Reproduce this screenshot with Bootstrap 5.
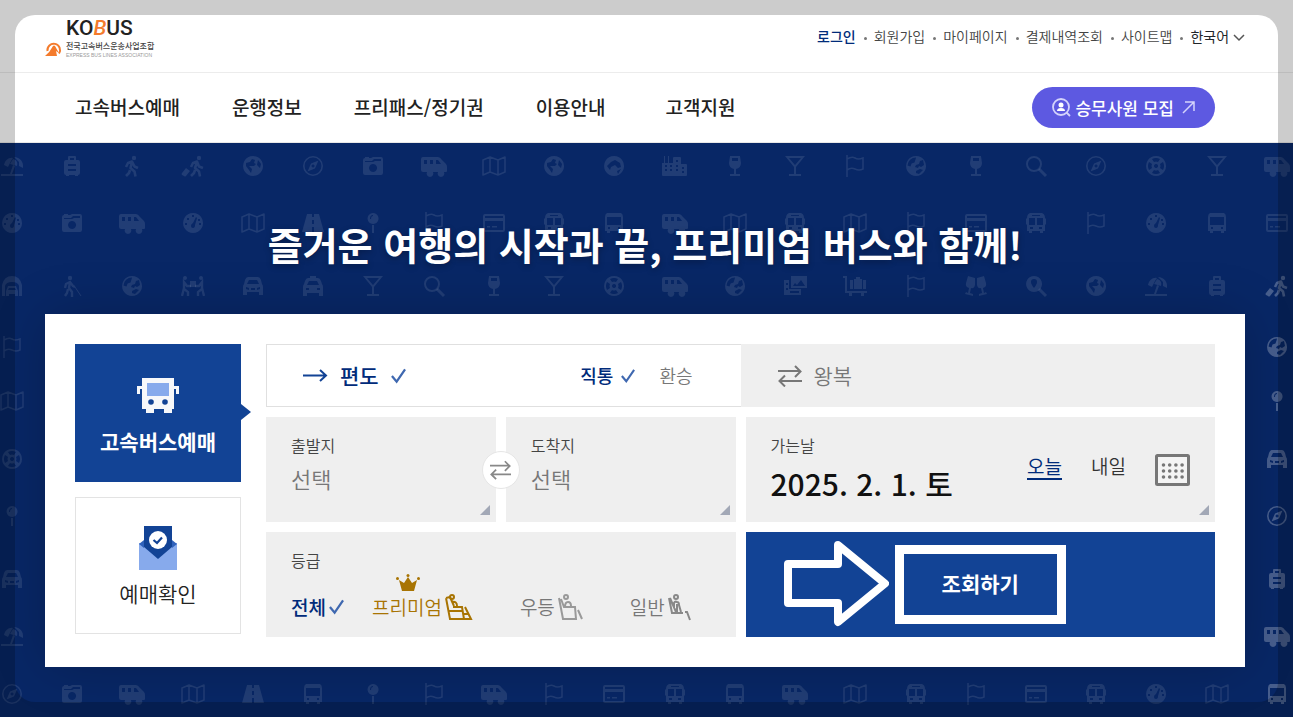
<!DOCTYPE html>
<html lang="ko">
<head>
<meta charset="utf-8">
<meta name="viewport" content="width=device-width, initial-scale=1">
<title>KOBUS 전국고속버스운송사업조합</title>
<link href="https://cdn.jsdelivr.net/npm/bootstrap@5.3.0/dist/css/bootstrap.min.css" rel="stylesheet">
<style>
  :root { --navy: #002b7a; --blue: #124395; --deep: #082766; --pane: #efefef; --gold: #a87403; }
  body { font-family: "Noto Sans CJK KR", "Noto Sans", sans-serif; font-size: 16px; color: #222; background: var(--deep); }
  a { color: inherit; text-decoration: none; }
  button { border: 0; padding: 0; background: none; color: inherit; text-align: left; }
  .shell { margin-left: 45px; margin-right: 48px; }

  /* rounded window frame that dims the edge of the page */
  .window-frame { position: fixed; inset: 15px; border-radius: 20px; box-shadow: 0 0 0 60px rgba(0,0,0,.2); pointer-events: none; z-index: 1050; }

  .topbar { height: 73px; border-bottom: 1px solid #ececec; }
  .brand { display: grid; grid-template-columns: 17px auto; column-gap: 4px; padding-top: 16px; }
  .brand-word { grid-column: 2; font: 500 21px/24px Roboto, sans-serif; color: #222; }
  .brand-word i { color: #f47b2c; }
  .brand-mark { grid-column: 1; grid-row: 2; margin-top: 1px; }
  .brand-sub { font-size: 8px; line-height: 12px; font-weight: 500; color: #444; }
  .brand-en { display: block; font: 5px/6px "Liberation Sans", sans-serif; color: #999; }
  .util { font-size: 14px; line-height: 20px; font-weight: 350; color: #444; padding-top: 26px; }
  .util li + li::before { content: ""; display: inline-block; width: 3px; height: 3px; border-radius: 50%; background: #777; margin: 0 7px 0 8px; vertical-align: middle; }
  .util .login { color: var(--navy); font-weight: 500; }

  .mainbar { height: 70px; border-bottom: 1px solid #e8e8e8; }
  .mainbar .shell { padding: 0 30px; }
  .mainbar .menu { gap: 52px; font-size: 19px; font-weight: 500; }
  .recruit { height: 41px; padding: 0 20px; gap: 4px; border-radius: 21px; background: #5d59e1; color: #fff; font-size: 17px; font-weight: 500; }

  .hero { overflow: hidden; background: var(--deep); }
  .pattern { position: absolute; inset: 0; padding: 11px 4px 0 0; color: rgba(255,255,255,.1); display: grid; align-content: start; grid-template-rows: 57px 63px 61px 54px 58px 57px 63px 57px 58px 24px; }
  .pattern svg { width: 24px; height: 24px; display: block; overflow: visible; }
  .pattern .bright { color: rgba(255,255,255,.26); }
  .headline { padding-top: 72px; margin-bottom: 42px; font-size: 38px; line-height: 57px; font-weight: 700; color: #fff; text-shadow: 0 2px 6px rgba(0,0,0,.3); }

  .booking { background: #fff; padding: 30px; gap: 25px; box-shadow: 0 0 50px rgba(0,0,0,.2); margin-bottom: 50px; }
  .side { width: 166px; flex: none; gap: 15px; }
  .side-tab { height: 137px; border: 1px solid #e3e3e3; font-size: 21px; line-height: 31px; gap: 8px; font-weight: 350; color: #222; padding-top: 2px; }
  .side-tab.current { height: 138px; border: 0; background: var(--blue); color: #fff; font-weight: 700; gap: 12px; padding-top: 8px; }
  .side-tab.current::after { content: ""; position: absolute; left: 100%; top: 60px; border: solid transparent; border-width: 8px 0 8px 10px; border-left-color: var(--blue); }

  .tight { --bs-gutter-x: 10px; --bs-gutter-y: 10px; }
  .pair { --bs-gutter-x: 10px; --bs-gutter-y: 0; }
  .trip { height: 63px; font-size: 21px; }
  .trip label { gap: 12px; }
  .trip-row { margin-bottom: 10px; }
  .trip-oneway { border: 1px solid #e0e0e0; border-right: 0; padding: 0 48px 0 36px; }
  .trip-round { background: var(--pane); padding: 0 37px; color: #777; font-weight: 350; }
  .on { color: var(--navy); font-weight: 500; }
  .off { color: #777; font-weight: 350; }
  .tick { height: 16px; color: #3f68b0; }
  .trip .opt { display: flex; align-items: center; font-size: 18px; gap: 8px; }
  .pane { height: 105px; background: var(--pane); padding: 16px 25px; position: relative; }
  .cap { display: block; font-size: 16px; line-height: 24px; font-weight: 350; color: #444; }
  .pick { display: block; font-size: 22px; line-height: 33px; margin-top: 5px; color: #777; font-weight: 350; }
  .corner::after { content: ""; position: absolute; right: 6px; bottom: 7px; border: 5px solid #a2a8b6; border-top-color: transparent; border-left-color: transparent; }
  .swap { position: absolute; left: 50%; top: 50%; transform: translate(-50%,-50%); width: 38px; height: 38px; border: 1px solid #e6e6e6; border-radius: 50%; background: #fff; color: #888; z-index: 2; }
  .date { display: block; font-size: 30px; line-height: 45px; font-weight: 500; color: #111; margin-top: 4px; }
  .days { gap: 29px; }
  .day { font-size: 19px; line-height: 24px; font-weight: 350; color: #333; border-bottom: 2px solid transparent; margin-bottom: 5px; }
  .day.on { color: var(--navy); font-weight: 400; border-bottom-color: var(--navy); }
  .grades { gap: 28px; margin-top: 21px; }
  .grade { font-size: 19px; line-height: 28px; gap: 3px; }
  .grade.off { margin-left: 19px; }
  .gold { color: var(--gold); font-weight: 350; }
  .crown { position: absolute; left: 24px; top: -19px; }
  .search { height: 105px; background: var(--blue); color: #fff; position: relative; }
  .search-mark { width: 171px; height: 79px; border: 9px solid #fff; font-size: 21px; font-weight: 700; padding-bottom: 2px; }
  .pointer { position: absolute; right: calc(50% + 91px); top: 8px; }
</style>
</head>
<body class="d-flex flex-column min-vh-100">

<svg width="0" height="0" class="position-absolute" aria-hidden="true">
  <defs>
    <symbol id="umbrella" viewBox="0 0 24 24"><path fill="currentColor" d="M4 11C5 6 9 3 13 4l-2 3-3 6zM14 3c6 0 10 5 9 11l-4-2 0-4zM13 5c4 1 5 4 4 7l-7-2zM13 11l2 1-3 8h11v2H1v-2h9z"/></symbol>
    <symbol id="case" viewBox="0 0 24 24"><path fill="currentColor" fill-rule="evenodd" d="M8 6V3q0-1 1-1h6q1 0 1 1v3h2q2 0 2 2v11q0 2-2 2v1h-3v-1H9v1H6v-1q-2 0-2-2V8q0-2 2-2zm2 0h4V4h-4zM8 10v2h8v-2zm0 5v2h8v-2z"/></symbol>
    <symbol id="walk" viewBox="0 0 24 24"><circle cx="14" cy="4" r="2.200" fill="currentColor"/><path fill="none" stroke="currentColor" stroke-width="2.600" stroke-linejoin="round" d="M6 13l2-4 4-1.500 2.500 5 3.500 1.500M12 8l-1.500 6 4 3.500 1 5M10 16l-1 3-3 3"/></symbol>
    <symbol id="hike" viewBox="0 0 24 24"><circle cx="18" cy="4" r="2.200" fill="currentColor"/><path fill="currentColor" d="M1 19l4-5 4 3-4 5q-1 1-2 0l-2-1q-1-1 0-2z"/><path fill="none" stroke="currentColor" stroke-width="2.600" stroke-linejoin="round" d="M10 13l2-4 4-1.500 2 5 4 1.500M16 8l-2 6 4 3.500 1 5M14 16l-1 3-3 3"/></symbol>
    <symbol id="africa" viewBox="0 0 24 24"><path fill="currentColor" fill-rule="evenodd" d="M12 2a10 10 0 1 0 .1 0zM5 9l4-1 2-3 3 1-1 3 2 1-2 2-5 0 3 3-1 4-2-3-3-4zM17 6l3 4-1 4-3-3z"/></symbol>
    <symbol id="globe" viewBox="0 0 24 24"><path fill="currentColor" fill-rule="evenodd" d="M12 2a10 10 0 1 0 .1 0zM12 3.500a8.500 8.500 0 0 0-8.500 8l3 1 1-3 3-1 1-3zM16 7l3-1 1 5-3 2-2-1-1 2-3-1 1-2 3-1zM12 17l4-2 3 1-4 4-3-1z"/></symbol>
    <symbol id="asia" viewBox="0 0 24 24"><path fill="currentColor" fill-rule="evenodd" d="M12 2a10 10 0 1 0 .1 0zM5 12l4-4 4-2 5 3 1 4-3 1-3-3-4 2-1 3zM15 17l4-2-3 5z"/></symbol>
    <symbol id="compass" viewBox="0 0 24 24"><circle cx="12" cy="12" r="9.200" fill="none" stroke="currentColor" stroke-width="1.600"/><path fill="currentColor" fill-rule="evenodd" d="M17.500 6.500l-3.500 8-7.500 3 3.500-8zM12 10.500a1.500 1.500 0 1 0 .1 0z"/></symbol>
    <symbol id="camera" viewBox="0 0 24 24"><path fill="currentColor" fill-rule="evenodd" d="M4 4V3h4v1h2l2-1h8q2 0 2 2v14q0 2-2 2H4q-2 0-2-2V6q0-2 2-2zm0 3v1h8l2-1h6V5h-7l-2 2zM12 10a4 4 0 1 0 .1 0z"/></symbol>
    <symbol id="van" viewBox="1 0 24 24" overflow="visible"><path fill="currentColor" fill-rule="evenodd" d="M2 3h15q2 0 4 3l4 4q1 1 1 3v4q0 1-1 1h-2a3.400 3.400 0 1 1-6 0h-5a3.400 3.400 0 1 1-6 0H2q-2 0-2-2V5q0-2 2-2zM3 6v4h3V6zm6 0v4h3V6zm6 0v4h5l-3-4z"/></symbol>
    <symbol id="map" viewBox="0 0 24 24"><path fill="none" stroke="currentColor" stroke-width="1.600" stroke-linejoin="round" d="M1 6l7-3v15l-7 3zM8 3l8 3v15l-8-3M16 6l7-3v15l-7 3"/></symbol>
    <symbol id="city" viewBox="1 0 24 24" overflow="visible"><path fill="currentColor" fill-rule="evenodd" d="M0 9h2V2h1v7h3V2h1v7h4V4q0-1 1-1h6q1 0 1 1v6h5q1 0 1 1v10q0 1-1 1H1q-1 0-1-1zm3 2v2h2v-2zm5 0v2h2v-2zm6-5v2h2V6zm0 5v2h2v-2zM3 15v2h2v-2zm5 0v2h2v-2zm6 0v2h2v-2zm6-2v2h2v-2zm0 4v2h2v-2z"/></symbol>
    <symbol id="wine" viewBox="0 0 24 24"><path fill="currentColor" fill-rule="evenodd" d="M7 2h10l1 7q0 5-5 6v5h4v2H7v-2h4v-5q-5-1-5-6zm2 2v3h6V4z"/></symbol>
    <symbol id="cocktail" viewBox="0 0 24 24"><path fill="currentColor" fill-rule="evenodd" d="M2 2h20l-9 11v7h5v2H6v-2h5v-7zm4 2l6 7 6-7z"/></symbol>
    <symbol id="flag" viewBox="0 0 24 24"><path fill="none" stroke="currentColor" stroke-width="1.600" d="M4 1v22M4 5q5-3 8-1t8 0v11q-4 2-8 0t-8 1"/></symbol>
    <symbol id="lens" viewBox="0 0 24 24"><g fill="none" stroke="currentColor"><circle cx="10" cy="10" r="7" stroke-width="2"/><path stroke-width="3" d="M15 15l7 7"/></g></symbol>
    <symbol id="lenspin" viewBox="0 0 24 24"><path fill="currentColor" fill-rule="evenodd" d="M10 2a8 8 0 1 0 .1 0zm0 3q3 0 3 3 0 2-3 6-3-4-3-6 0-3 3-3z"/><path stroke="currentColor" stroke-width="3" d="M15 15l7 7"/></symbol>
    <symbol id="ring" viewBox="0 0 24 24"><path fill="currentColor" fill-rule="evenodd" d="M12 2a10 10 0 1 0 .1 0zM8 5q4-2 8 0l-2 3q-2-1-4 0zM5 8q-2 4 0 8l3-2q-1-2 0-4zM19 8q2 4 0 8l-3-2q1-2 0-4zM8 19q4 2 8 0l-2-3q-2 1-4 0zM12 10a2 2 0 1 0 .1 0z"/></symbol>
    <symbol id="gauge" viewBox="0 0 24 24"><path fill="currentColor" fill-rule="evenodd" d="M12 2a10 10 0 1 0 .1 0zM15 6l1 1-2 7q0 3-2 3t-2-2 2-3zM11 4h2v2h-2zM6 7h2v2H6zM4 12h2v2H4zM18 12h2v2h-2zM17 8h2v2h-2z"/></symbol>
    <symbol id="card-pay" viewBox="0 0 24 24"><path fill="currentColor" fill-rule="evenodd" d="M3 3h18q2 0 2 2v14q0 2-2 2H3q-2 0-2-2V5q0-2 2-2zm0 2v2h18V5zm0 5v9h18v-9zm2 5h3v1.500H5zm5 0h5v1.500h-5z"/></symbol>
    <symbol id="bus" viewBox="0 0 24 24"><path fill="currentColor" fill-rule="evenodd" d="M5 2h14q2 1 2 4v14h-2v2h-3v-2H8v2H5v-2H3V6q0-3 2-4zm0 4v8h14V6zm1 10v2h2v-2zm10 0v2h2v-2z"/></symbol>
    <symbol id="coach" viewBox="0 0 24 24"><path fill="currentColor" fill-rule="evenodd" d="M6 2h12q3 1 3 5l1 1v5l-1 1v6h-2v2h-3v-2H8v2H5v-2H3v-6l-1-1V8l1-1q0-4 3-5zM8 4v1h8V4zM5 7v7h6V7zm8 0v7h6V7zM6 16v2h3v-2zm9 0v2h3v-2z"/></symbol>
    <symbol id="road" viewBox="0 0 24 24"><path fill="currentColor" fill-rule="evenodd" d="M6 3h5v3h2V3h5l5 18H13v-5h-2v5H1zm5 6v4h2V9z"/></symbol>
    <symbol id="pin" viewBox="0 0 24 24"><path fill="currentColor" fill-rule="evenodd" d="M12 2a5.500 5.500 0 1 0 .1 0zM9 8q0-4 3-4v1q-2 0-2 3zM11 14h2v8h-2z"/></symbol>
    <symbol id="garage" viewBox="0 0 24 24"><path fill="currentColor" fill-rule="evenodd" d="M2 22V11Q4 2 12 2t10 9v11h-3V12q-1-4-7-4t-7 4v10z"/><path fill="currentColor" fill-rule="evenodd" d="M8 12h8l2 5v5h-3v-2H9v2H6v-5zm1 2l-1 2h8l-1-2z"/></symbol>
    <symbol id="blind" viewBox="0 0 24 24"><circle cx="10" cy="4" r="2.200" fill="currentColor"/><path fill="none" stroke="currentColor" stroke-width="2.400" d="M5 14l1-4 4-2 3 4 2 1M10 8l-1 6 3 4v5M8 15l-1 4-2 3"/><path stroke="currentColor" d="M15 13l6 9"/></symbol>
    <symbol id="carry" viewBox="0 0 24 24"><circle cx="4" cy="4" r="2" fill="currentColor"/><circle cx="20" cy="4" r="2" fill="currentColor"/><path fill="currentColor" d="M9 7h6v6H9z"/><path fill="none" stroke="currentColor" stroke-width="2.400" d="M10 12H6L3 8v7l4 3v4M3 14l-2 8M14 12h4l3-4v7l-4 3v4M21 14l2 8"/></symbol>
    <symbol id="car" viewBox="0 0 24 24"><path fill="currentColor" fill-rule="evenodd" d="M7 3h10q2 0 3 3l1 4q1 1 1 3v8h-4v-3H6v3H2v-8q0-2 1-3l1-4q1-3 3-3zm1 3l-2 4h12l-2-4zM5 13v2l3 1v-2zm14 0l-3 1v2l3-1zM10 14v2h4v-2z"/></symbol>
    <symbol id="taxi" viewBox="0 0 24 24"><path fill="currentColor" fill-rule="evenodd" d="M9 2h6v2h2q2 0 3 3l1 3q1 1 1 3v9h-4v-3H6v3H2v-9q0-2 1-3l1-3q1-3 3-3h2zM8 7l-2 4h12l-2-4zM5 14v2h3v-2zm11 0v2h3v-2z"/></symbol>
    <symbol id="photos" viewBox="0 0 24 24"><path fill="currentColor" fill-rule="evenodd" d="M8 2h16v12H8zm2 10h12l-4-6-4 5-2-2zM1 6h5v9h12v6H1zm2 3v2h2V9zm0 5v2h2v-2zm4 3v2h9v-2z"/></symbol>
    <symbol id="cart" viewBox="0 0 24 24"><path fill="currentColor" d="M0 2h4v15h20v2h-3v3h-3v-3H9v3H6v-3H2V4H0zM7 6h3v9H7zM11 5h2V3h4v2h2v10h-8zM20 6h3v9h-3z"/></symbol>
    <symbol id="cheers" viewBox="0 0 24 24"><path fill="currentColor" d="M4 2l7 2v7q-1 4-4 3l-1 5 3 1v2l-8-2 1-2 2 1 1-5Q1 13 2 9zM20 2l-7 2v7q1 4 4 3l1 5-3 1v2l8-2-1-2-2 1-1-5q4-1 3-5z"/></symbol>

    <symbol id="check" viewBox="0 0 16 16"><path fill="none" stroke="currentColor" stroke-width="2.400" d="M1 8l5 6L15 1"/></symbol>
    <symbol id="arrows" viewBox="0 0 24 22"><path fill="none" stroke="currentColor" stroke-width="2" d="M0 6h22M17 1l5.500 5.500L17 12M24 16H2M7 10.500L1.500 16 7 21.500"/></symbol>
  </defs>
</svg>

<header class="bg-white">
  <div class="topbar">
    <div class="shell d-flex justify-content-between">
      <a href="#" class="brand" aria-label="KOBUS">
        <span class="brand-word">KO<i>B</i>US</span>
        <svg class="brand-mark" width="17" height="15" viewBox="0 0 17 15" aria-hidden="true"><path fill="none" stroke="#f47b2c" stroke-width="2" d="M2.500 10A6.300 6.300 0 1 1 14 12.500"/><path fill="#f47b2c" d="M0 15q5-4 8-10 1-1 2 0l4 7-3-2 1 5z"/></svg>
        <span class="brand-sub">전국고속버스운송사업조합<span class="brand-en">EXPRESS BUS LINES ASSOCIATION</span></span>
      </a>
      <ul class="util list-unstyled d-flex mb-0">
        <li><a href="#" class="login">로그인</a></li>
        <li><a href="#">회원가입</a></li>
        <li><a href="#">마이페이지</a></li>
        <li><a href="#">결제내역조회</a></li>
        <li><a href="#">사이트맵</a></li>
        <li><button type="button" class="text-dark">한국어 <svg width="12" height="8" viewBox="0 0 12 8" aria-hidden="true"><path fill="none" stroke="#555" stroke-width="1.500" d="M1 1l5 5 5-5"/></svg></button></li>
      </ul>
    </div>
  </div>
  <div class="mainbar">
    <div class="shell d-flex align-items-center justify-content-between h-100">
      <nav class="menu d-flex">
        <a href="#">고속버스예매</a><a href="#">운행정보</a><a href="#">프리패스/정기권</a><a href="#">이용안내</a><a href="#" class="ms-2">고객지원</a>
      </nav>
      <a href="#" class="recruit d-flex align-items-center">
        <svg width="19" height="19" viewBox="0 0 19 19" aria-hidden="true"><g fill="none" stroke="#d4d3fb" stroke-width="1.800"><circle cx="9" cy="9" r="8"/><path d="M14.500 14.500L18 18"/></g><circle cx="9" cy="7" r="2.500" fill="#fff"/><path fill="#fff" d="M5 13q0-3 4-3t4 3z"/></svg>
        승무사원 모집
        <svg class="ms-1" width="13" height="13" viewBox="0 0 13 13" aria-hidden="true"><path fill="none" stroke="#d4d3fb" stroke-width="1.500" d="M1 12L12 1M3 1h9v9"/></svg>
      </a>
    </div>
  </div>
</header>

<main class="hero position-relative flex-grow-1">
  <div class="pattern" id="pattern" aria-hidden="true"></div>

  <div class="shell position-relative">
    <h1 class="headline text-center">즐거운 여행의 시작과 끝, 프리미엄 버스와 함께!</h1>

    <section class="booking d-flex">
      <div class="side d-flex flex-column">
        <button type="button" class="side-tab current position-relative d-flex flex-column align-items-center justify-content-center">
          <svg width="42" height="36" viewBox="0 0 42 36" aria-hidden="true"><path fill="#f7f8fa" d="M5 0h32v8h5v8h-3v-5h-2v20h-2v4h-8v-4H17v4H9v-4H5V11H3v5H0V8h5z"/><path fill="#87aaec" d="M10 5h22v13H10z"/><circle cx="14" cy="24" r="2.800" fill="#124395"/><circle cx="28" cy="24" r="2.800" fill="#124395"/></svg>
          고속버스예매
        </button>
        <button type="button" class="side-tab d-flex flex-column align-items-center justify-content-center">
          <svg width="40" height="45" viewBox="0 0 40 45" aria-hidden="true"><path fill="#87aaec" d="M1 18h38v27H1z"/><path fill="#2f62bb" d="M1 19l5-4v8zM39 19l-5-4v8z"/><path fill="#124395" d="M6 1h28v21L20 34 6 22z"/><circle cx="20" cy="15" r="9" fill="#fff"/><path fill="none" stroke="#124395" stroke-width="2.200" d="M15.500 15l3.500 3 5-5.500"/></svg>
          예매확인
        </button>
      </div>

      <form class="flex-grow-1">
        <div class="row g-0 trip-row">
          <div class="col-6">
            <div class="trip trip-oneway d-flex align-items-center">
              <input type="radio" class="btn-check" name="trip" id="oneway" checked>
              <label for="oneway" class="on d-flex align-items-center">
                <svg width="25" height="13" viewBox="0 0 25 13" aria-hidden="true"><path fill="none" stroke="#124395" stroke-width="2" d="M0 6.500h23M17 1l6 5.500-6 5.500"/></svg>편도<svg class="tick" width="15"><use href="#check"/></svg>
              </label>
              <div class="ms-auto d-flex align-items-center gap-4">
                <div><input type="radio" class="btn-check" name="route" id="direct" checked><label for="direct" class="opt on">직통<svg class="tick" width="14"><use href="#check"/></svg></label></div>
                <div><input type="radio" class="btn-check" name="route" id="transfer"><label for="transfer" class="opt off">환승</label></div>
              </div>
            </div>
          </div>
          <div class="col-6">
            <div class="trip trip-round d-flex align-items-center">
              <input type="radio" class="btn-check" name="trip" id="round">
              <label for="round" class="d-flex align-items-center"><svg width="24" height="22"><use href="#arrows"/></svg><span>왕복</span></label>
            </div>
          </div>
        </div>

        <div class="row tight">
          <div class="col-6">
            <div class="row pair position-relative">
              <div class="col-6"><button type="button" class="pane corner w-100 d-flex flex-column align-items-start"><span class="cap">출발지</span><span class="pick">선택</span></button></div>
              <div class="col-6"><button type="button" class="pane corner w-100 d-flex flex-column align-items-start"><span class="cap">도착지</span><span class="pick">선택</span></button></div>
              <div class="position-absolute top-0 start-0 w-100 h-100 pe-none"><button type="button" class="swap pe-auto d-flex align-items-center justify-content-center" aria-label="출발지 도착지 교체"><svg width="21" height="20"><use href="#arrows"/></svg></button></div>
            </div>
          </div>
          <div class="col-6">
            <div class="pane corner d-flex justify-content-between">
              <button type="button"><span class="cap">가는날</span><span class="date">2025. 2. 1. 토</span></button>
              <div class="days d-flex align-items-center">
                <button type="button" class="day on">오늘</button>
                <button type="button" class="day">내일</button>
                <button type="button" aria-label="달력"><svg width="35" height="32" viewBox="0 0 35 32" aria-hidden="true"><rect x="1.500" y="1.500" width="32" height="29" rx="1" fill="#f4f4f4" stroke="#777" stroke-width="3"/><path stroke="#777" stroke-width="3.600" stroke-linecap="round" stroke-dasharray="0 6.200" d="M8.500 11h19M8.500 17h19M8.500 23h19"/></svg></button>
              </div>
            </div>
          </div>
          <div class="col-6">
            <div class="pane">
              <span class="cap">등급</span>
              <div class="d-flex grades">
                <input type="radio" class="btn-check" name="grade" id="all" checked>
                <label for="all" class="grade on d-flex align-items-center">전체<svg class="tick" width="15"><use href="#check"/></svg></label>
                <input type="radio" class="btn-check" name="grade" id="premium">
                <label for="premium" class="grade gold position-relative d-flex align-items-center">
                  <svg class="crown" width="24" height="17" viewBox="0 0 24 17" aria-hidden="true"><path fill="#a87403" d="M3 6l5 3 4-6 4 6 5-3-3 11H6z"/><circle cx="1.500" cy="4.500" r="1.500" fill="#a87403"/><circle cx="12" cy="1.500" r="1.500" fill="#a87403"/><circle cx="22.500" cy="4.500" r="1.500" fill="#a87403"/></svg>
                  프리미엄<svg width="28" height="27" viewBox="0 0 28 27" aria-hidden="true"><g fill="none" stroke="#a87403" stroke-width="2"><path d="M1 4l4 21h14l-2-12H8M1 4l4-1 4 9M4 17h14M7 8q5-1 5 4M20 13l6 12h-7M18 20h5"/><circle cx="7" cy="3" r="2"/></g></svg>
                </label>
                <input type="radio" class="btn-check" name="grade" id="deluxe">
                <label for="deluxe" class="grade off d-flex align-items-center">우등<svg width="25" height="27" viewBox="0 0 25 27" aria-hidden="true"><g fill="none" stroke="#999" stroke-width="2"><path d="M1 4l4 21h13l-1-12H6L3 5M7 13q0-5 3-5t3 4M20 16l4 9"/><circle cx="8" cy="3" r="2"/></g></svg></label>
                <input type="radio" class="btn-check" name="grade" id="standard">
                <label for="standard" class="grade off d-flex align-items-center">일반<svg width="23" height="27" viewBox="0 0 23 27" aria-hidden="true"><g fill="none" stroke="#888" stroke-width="2"><path d="M1 4l3 15h11M2 4l6 14M6 14V9q1-2 3-1 2 0 2 3l2 7M9 10v8M17 18h2l3 8"/><circle cx="8" cy="3" r="2"/></g></svg></label>
              </div>
            </div>
          </div>
          <div class="col-6">
            <button type="submit" class="search w-100 d-flex align-items-center justify-content-center">
              <svg class="pointer" width="106" height="88" viewBox="0 0 106 88" aria-hidden="true"><path fill="none" stroke="#fff" stroke-width="8" stroke-linejoin="round" d="M5 24h50V5l47 38.500L55 82V63H5z"/></svg>
              <span class="search-mark d-flex align-items-center justify-content-center">조회하기</span>
            </button>
          </div>
        </div>
      </form>
    </section>
  </div>
</main>

<div class="window-frame"></div>

<script src="https://cdn.jsdelivr.net/npm/bootstrap@5.3.0/dist/js/bootstrap.bundle.min.js"></script>
<script>
  // travel pictograms behind the booking form, one string per line
  const lines = [
    'umbrella case walk hike africa compass camera van map africa asia city wine cocktail flag globe wine lens compass ring cocktail van',
    'gauge camera van gauge map road pin flag card-pay coach bus van map coach map flag card-pay coach flag gauge bus card-pay',
    'garage blind globe carry car taxi cocktail lens wine cocktail ring van globe photos cart flag cheers lenspin africa umbrella case hike',
    'flag globe', 'map pin', 'ring car', 'pin compass', 'car case', 'umbrella van',
    'compass camera van map road bus pin flag van flag card-pay coach bus van map coach flag card-pay coach gauge map bus'
  ];
  document.getElementById('pattern').innerHTML = lines.map((line, row) => {
    const names = line.split(' ');
    return '<div class="d-flex justify-content-between">' + names.map((name, i) =>
      `<svg${row > 1 && i === names.length - 1 ? ' class="bright"' : ''}><use href="#${name}"/></svg>`).join('') + '</div>';
  }).join('');
</script>
</body>
</html>
